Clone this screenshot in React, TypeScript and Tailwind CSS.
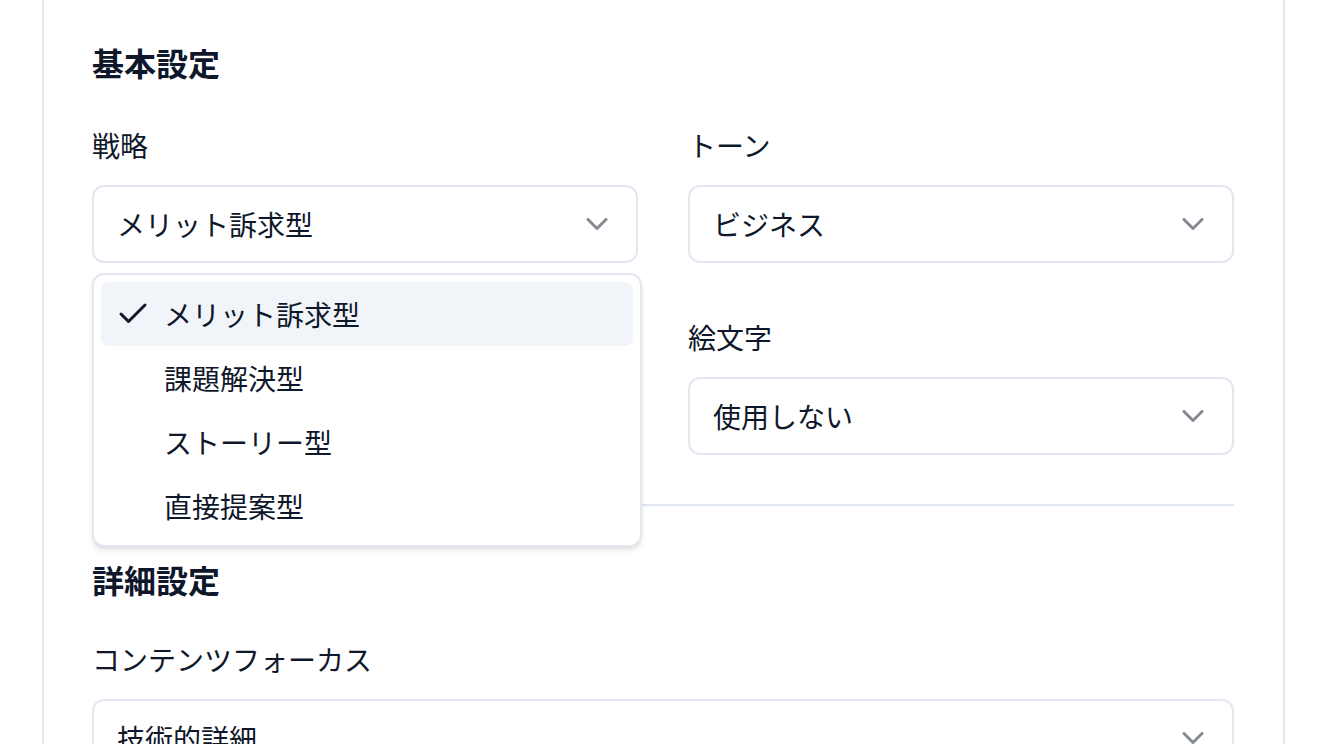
import { Check, ChevronDown } from 'lucide-react';

const font = { fontFamily: '"Noto Sans CJK JP", "Noto Sans", sans-serif' };

function SelectBox({ value }: { value: string }) {
  return (
    <div className="flex h-[78px] w-full items-center justify-between rounded-[12px] border-2 border-[#e2e8f0] bg-white pl-[23px] pr-[21px]">
      <span className="text-[28px] leading-[40px] text-[#0f172a]">{value}</span>
      <ChevronDown size={36} strokeWidth={2} className="text-[#0f172a] opacity-50" />
    </div>
  );
}

function Field({ label, children }: { label: string; children: React.ReactNode }) {
  return (
    <div className="flex flex-col gap-[20px]">
      <div className="text-[28px] leading-[40px] text-[#0f172a]">{label}</div>
      {children}
    </div>
  );
}

const strategies = ['メリット訴求型', '課題解決型', 'ストーリー型', '直接提案型'];

export default function App() {
  return (
    <div className="h-screen bg-white overflow-hidden" style={font}>
      <div className="ml-[42px] mr-[45px] -mt-[20px] rounded-[24px] border-2 border-[#e2e8f0] bg-white pl-[48px] pr-[49px] pt-[56px] pb-[60px]">
        <h2 className="text-[32px] font-bold leading-[48px] text-[#0f172a]">基本設定</h2>

        <div className="mt-[39px] grid grid-cols-2 gap-x-[50px] gap-y-[54px]">
          <div className="relative">
            <Field label="戦略">
              <SelectBox value="メリット訴求型" />
            </Field>
            {/* open dropdown */}
            <div className="absolute left-0 top-[148px] z-10 w-[550px] rounded-[12px] border-2 border-[#e2e8f0] bg-white p-[7px] shadow-md">
              {strategies.map((s, i) => (
                <div
                  key={s}
                  className={`flex h-[64px] items-center rounded-[8px] ${i === 0 ? 'bg-[#f1f5f9]' : ''}`}
                >
                  <div className="flex w-[63px] justify-center">
                    {i === 0 && <Check size={36} strokeWidth={2} className="text-[#0f172a]" />}
                  </div>
                  <span className="text-[28px] leading-[40px] text-[#0f172a]">{s}</span>
                </div>
              ))}
            </div>
          </div>
          <Field label="トーン">
            <SelectBox value="ビジネス" />
          </Field>
          <Field label="文字数">
            <SelectBox value="標準" />
          </Field>
          <Field label="絵文字">
            <SelectBox value="使用しない" />
          </Field>
        </div>

        <div className="my-[49px] h-[2px] bg-[#e2e8f0]" />

        <h2 className="text-[32px] font-bold leading-[48px] text-[#0f172a]">詳細設定</h2>
        <div className="mt-[36px]">
          <Field label="コンテンツフォーカス">
            <SelectBox value="技術的詳細" />
          </Field>
        </div>
      </div>
    </div>
  );
}
